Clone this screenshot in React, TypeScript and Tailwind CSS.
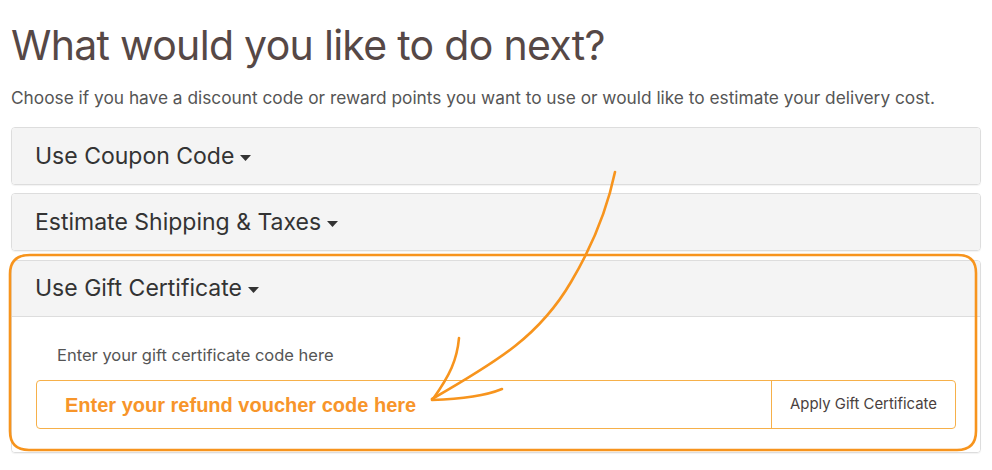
import { ReactNode } from 'react';

function Caret() {
  return (
    <svg width="11" height="6" viewBox="0 0 11 6" className="ml-[6px] mt-[3px] shrink-0">
      <path d="M0 0 L11 0 L5.5 6 Z" fill="#333333" />
    </svg>
  );
}

function PanelHeading({ title, open }: { title: string; open?: boolean }) {
  return (
    <div
      className={`flex h-[56px] items-center bg-[#f4f4f4] pl-[23px] text-[23px] text-[#333333] ${
        open ? 'border-b border-[#dddddd]' : ''
      }`}
    >
      <span>{title}</span>
      <Caret />
    </div>
  );
}

function Panel({ children }: { children: ReactNode }) {
  return (
    <div className="overflow-hidden rounded-[4px] border border-[#dddddd] shadow-[0_1px_1px_rgba(0,0,0,0.05)]">
      {children}
    </div>
  );
}

export default function App() {
  return (
    <div
      className="relative h-[470px] w-[992px] overflow-hidden bg-white px-[11px]"
      style={{ fontFamily: 'Inter, "Noto Sans", sans-serif' }}
    >
      <h1 className="pt-[23px] text-[41px] leading-[1.1] tracking-[-0.7px] text-[#564846]">
        What would you like to do next?
      </h1>
      <p className="mt-[20px] text-[17.3px] leading-[20px] text-[#555555]">
        Choose if you have a discount code or reward points you want to use or would like to estimate your delivery cost.
      </p>

      <div className="mt-[19px] flex flex-col gap-[8px]">
        <Panel>
          <PanelHeading title="Use Coupon Code" />
        </Panel>
        <Panel>
          <PanelHeading title="Estimate Shipping & Taxes" />
        </Panel>
        <div className="mt-[1px]">
          <Panel>
            <PanelHeading title="Use Gift Certificate" open />
            <div className="bg-white px-[24px] pb-[23px] pt-[28px]">
              <label className="block pl-[21px] text-[16.5px] leading-[20px] text-[#555555]">
                Enter your gift certificate code here
              </label>
              <div className="mt-[15px] flex h-[49px] rounded-[4px] border-[1.5px] border-[#f6b04a]">
                <input
                  className="flex-1 bg-transparent pl-[28px] text-[20px] font-bold text-[#f7931e] outline-none placeholder:text-[#f7952a]"
                  style={{ fontFamily: '"Liberation Sans", Arial, sans-serif' }}
                  placeholder="Enter your refund voucher code here"
                />
                <button className="w-[184px] border-l-[1.5px] border-[#f6b04a] text-[14.9px] text-[#4a3f3e]">
                  Apply Gift Certificate
                </button>
              </div>
            </div>
          </Panel>
        </div>
      </div>

      {/* hand-drawn annotation overlay */}
      <svg
        className="pointer-events-none absolute left-0 top-0"
        width="992"
        height="470"
        viewBox="0 0 992 470"
        fill="none"
      >
        <path
          d="M30 255 L958 255 Q976 255 976 273 L976 431 Q976 450 957 450 L29 450 Q10 450 10 431 L10 274 Q10 255 30 255 Z"
          stroke="#f7941d"
          strokeWidth="2.6"
          strokeLinejoin="round"
        />
        <path
          d="M615 172 C606 215 590 250 571 282 C540 335 500 360 432 399"
          stroke="#f7941d"
          strokeWidth="2.6"
          strokeLinecap="round"
        />
        <path
          d="M459 338 C457 360 450 375 433 399"
          stroke="#f7941d"
          strokeWidth="2.6"
          strokeLinecap="round"
        />
        <path
          d="M502 389 C485 396 465 399 432 400"
          stroke="#f7941d"
          strokeWidth="2.6"
          strokeLinecap="round"
        />
      </svg>
    </div>
  );
}
